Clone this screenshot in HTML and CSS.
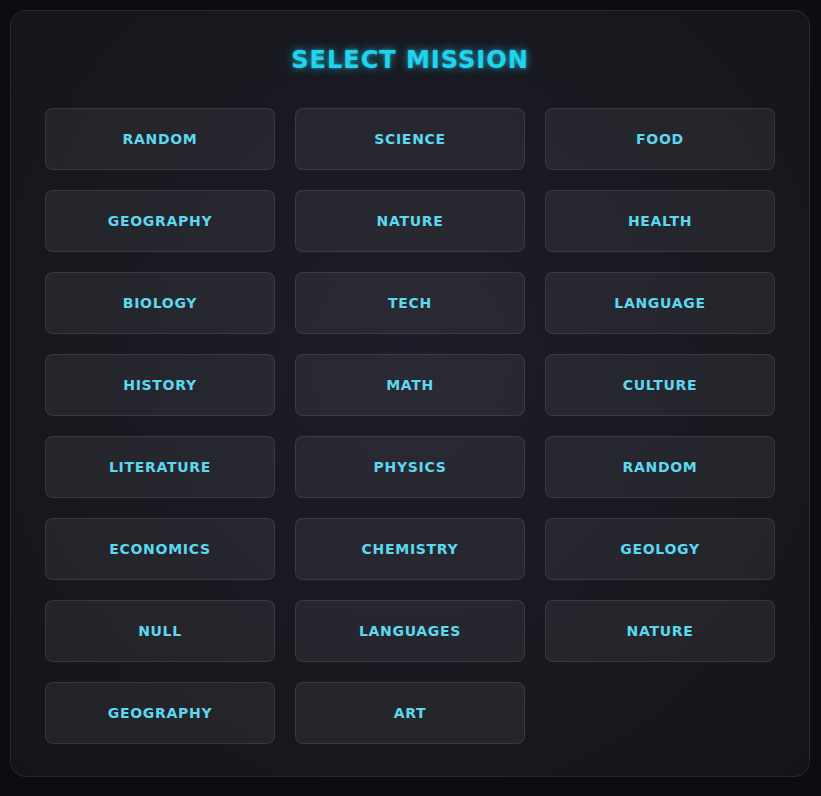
FILE: index.html
```html
<!DOCTYPE html>
<html lang="en">
<head>
<meta charset="utf-8">
<title>Select Mission</title>
<link rel="stylesheet" href="styles.css">
</head>
<body>
<div class="panel">
  <h1 class="title">SELECT MISSION</h1>
  <div class="grid">
    <button class="mission">RANDOM</button>
    <button class="mission">SCIENCE</button>
    <button class="mission">FOOD</button>
    <button class="mission">GEOGRAPHY</button>
    <button class="mission">NATURE</button>
    <button class="mission">HEALTH</button>
    <button class="mission">BIOLOGY</button>
    <button class="mission">TECH</button>
    <button class="mission">LANGUAGE</button>
    <button class="mission">HISTORY</button>
    <button class="mission">MATH</button>
    <button class="mission">CULTURE</button>
    <button class="mission">LITERATURE</button>
    <button class="mission">PHYSICS</button>
    <button class="mission">RANDOM</button>
    <button class="mission">ECONOMICS</button>
    <button class="mission">CHEMISTRY</button>
    <button class="mission">GEOLOGY</button>
    <button class="mission">NULL</button>
    <button class="mission">LANGUAGES</button>
    <button class="mission">NATURE</button>
    <button class="mission">GEOGRAPHY</button>
    <button class="mission">ART</button>
  </div>
</div>
</body>
</html>
```
FILE: styles.css
```css
* { box-sizing: border-box; }
html, body { margin: 0; }
body {
  background: #0c0c13;
  padding: 10px;
  font-family: "DejaVu Sans", "Liberation Sans", sans-serif;
  min-height: 796px;
}
.panel {
  width: 800px;
  height: 767px;
  border: 1px solid rgba(255,255,255,0.08);
  border-radius: 16px;
  background: radial-gradient(ellipse at 50% 45%, #1d1d29 0%, #18181f 60%, #141419 100%);
  padding: 34px 34px;
  display: flex;
  flex-direction: column;
}
.title {
  margin: 0 0 33px;
  text-align: center;
  font-size: 24px;
  line-height: 30px;
  font-weight: 700;
  letter-spacing: 1px;
  color: #22d3ee;
  text-shadow: 0 0 10px rgba(34,211,238,0.65), 0 0 3px rgba(34,211,238,0.5);
}
.grid {
  display: grid;
  grid-template-columns: repeat(3, 1fr);
  grid-auto-rows: 62px;
  gap: 20px;
}
.mission {
  font-family: inherit;
  background: rgba(255,255,255,0.06);
  border: 1px solid rgba(255,255,255,0.09);
  border-radius: 8px;
  color: #5cd8ef;
  font-size: 14px;
  font-weight: 700;
  letter-spacing: 0.7px;
  padding: 0;
}
```
